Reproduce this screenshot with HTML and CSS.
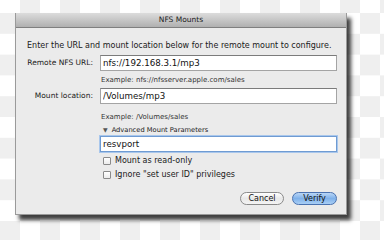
FILE: index.html
```html
<!DOCTYPE html>
<html>
<head>
    <title>NFS Mounts</title>
    <meta charset="utf-8">
    <link rel="stylesheet" href="styles.css">
</head>
<body>
    <div class="sheet">
        <div class="titlebar">NFS Mounts</div>
        <div class="content">
            <p class="intro">Enter the URL and mount location below for the remote mount to configure.</p>

            <div class="row">
                <label class="label">Remote NFS URL:</label>
                <input class="field" type="text" value="nfs://192.168.3.1/mp3">
            </div>
            <div class="hint">Example: nfs://nfsserver.apple.com/sales</div>

            <div class="row">
                <label class="label">Mount location:</label>
                <input class="field" type="text" value="/Volumes/mp3">
            </div>
            <div class="hint hint-2">Example: /Volumes/sales</div>

            <div class="disclosure"><span class="tri">&#9660;</span>Advanced Mount Parameters</div>
            <div class="row">
                <span class="label"></span>
                <input class="field focused" type="text" value="resvport">
            </div>

            <div class="checks">
                <label class="check"><span class="box"></span>Mount as read-only</label>
                <label class="check"><span class="box"></span>Ignore "set user ID" privileges</label>
            </div>

            <div class="buttons">
                <button class="btn cancel">Cancel</button>
                <button class="btn default">Verify</button>
            </div>
        </div>
    </div>
</body>
</html>
```

FILE: styles.css
```css
body {
    margin: 0;
    width: 384px;
    height: 240px;
    box-sizing: border-box;
    overflow: hidden;
    font-family: "DejaVu Sans", sans-serif;
    font-size: 8px;
    line-height: 10px;
    color: #1a1a1a;
    background-color: #fff;
    background-image: repeating-conic-gradient(#efefef 0 25%, #fff 0 50%);
    background-size: 40px 41.6px;
    background-position: 0 -7.8px;
    padding-top: 13px;
}
.sheet {
    margin-left: 15px;
    width: 332px;
    height: 202px;
    background: #ebebeb;
    border: 1px solid #9a9a9a;
    border-top: none;
    box-sizing: border-box;
    box-shadow: 4px 5px 4px rgba(0,0,0,0.75);
}
.titlebar {
    height: 14px;
    line-height: 14px;
    text-align: center;
    font-size: 7.5px;
    color: #222;
    background: linear-gradient(#dcdcdc, #b0b0b0);
    border-bottom: 1px solid #7f7f7f;
}
.content {
    padding: 13px 9px 0 10px;
}
.intro {
    margin: 0 0 4px 1px;
    white-space: nowrap;
}
.row {
    display: flex;
    align-items: center;
}
.label {
    flex: 0 0 67px;
    text-align: right;
    padding-right: 7px;
    white-space: nowrap;
    font-size: 7.5px;
}
.field {
    flex: 0 0 237px;
    width: 237px;
    height: 16px;
    box-sizing: border-box;
    border: 1px solid #a4a4a4;
    border-top-color: #7b7b7b;
    background: #fff;
    font-family: "DejaVu Sans", sans-serif;
    font-size: 8.7px;
    padding: 0 2px;
    color: #111;
    outline: none;
}
.focused {
    border: 1px solid #6f9bd2;
    box-shadow: 0 0 0 1px #a9c7ec;
}
.hint {
    font-size: 7px;
    color: #333;
    margin: 4px 0 3px 75px;
}
.hint-2 {
    margin-top: 8px;
}
.disclosure {
    font-size: 6.7px;
    margin: 2px 0 1px 77px;
}
.tri {
    font-size: 6px;
    color: #555;
    margin-right: 4px;
}
.checks {
    margin: 4px 0 0 77px;
    display: flex;
    flex-direction: column;
    gap: 4px;
}
.check {
    display: flex;
    align-items: center;
    gap: 4px;
}
.box {
    width: 6px;
    height: 6px;
    border: 1px solid #8a8a8a;
    background: linear-gradient(#fff, #ececec);
    border-radius: 1px;
}
.buttons {
    display: flex;
    justify-content: flex-end;
    gap: 8px;
    margin-top: 12px;
}
.btn {
    height: 13px;
    padding: 0;
    border-radius: 7px;
    border: 1px solid #8a8a8a;
    background: linear-gradient(#fff, #e8e8e8 50%, #f4f4f4);
    font-family: "DejaVu Sans", sans-serif;
    font-size: 8px;
    line-height: 11px;
    color: #111;
}
.cancel {
    width: 44px;
}
.default {
    width: 45px;
    border-color: #4a72b0;
    background: linear-gradient(#b9d6f6, #7fb1ea 50%, #a9cff5);
}
```
